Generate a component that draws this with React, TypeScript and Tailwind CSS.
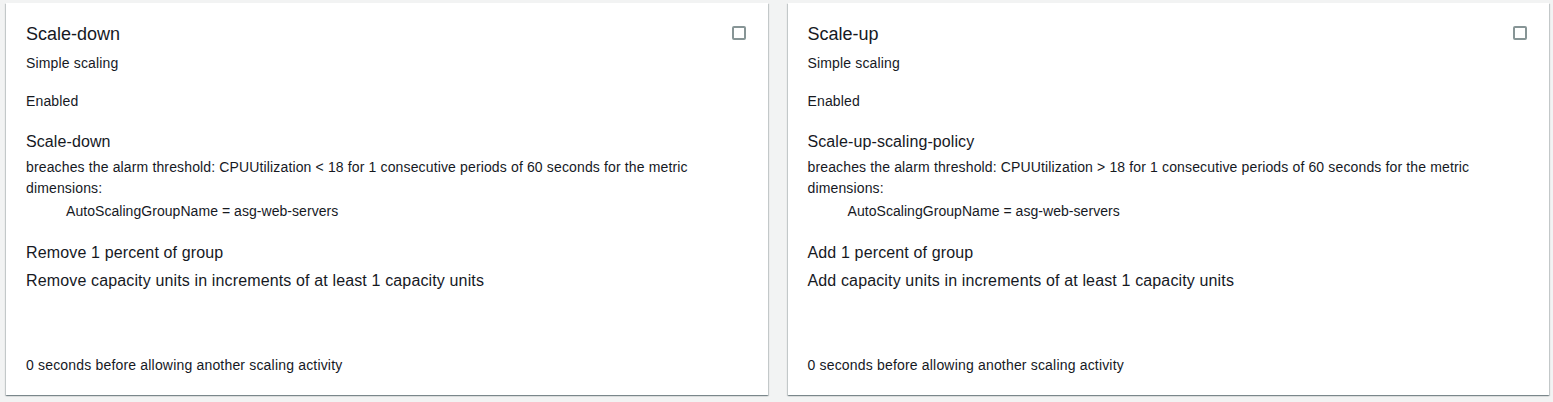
const policies = [
  {
    title: "Scale-down",
    alarm: "Scale-down",
    op: "<",
    action: "Remove 1 percent of group",
    detail: "Remove capacity units in increments of at least 1 capacity units",
  },
  {
    title: "Scale-up",
    alarm: "Scale-up-scaling-policy",
    op: ">",
    action: "Add 1 percent of group",
    detail: "Add capacity units in increments of at least 1 capacity units",
  },
];

function PolicyCard({ p }: { p: (typeof policies)[number] }) {
  return (
    <div className="flex-1 h-[392px] bg-white p-5 flex flex-col shadow-[0_1px_1px_0_rgba(0,28,36,0.3),1px_1px_1px_0_rgba(0,28,36,0.15),-1px_1px_1px_0_rgba(0,28,36,0.15)]">
      <div className="flex items-start justify-between">
        <div className="text-[18px] leading-[22px]">{p.title}</div>
        <input
          type="checkbox"
          className="appearance-none w-[14px] h-[14px] mt-[3px] mr-[2px] border-2 border-[#879596] rounded-[2px] bg-white"
        />
      </div>
      <div className="text-[14px] leading-[22px] mt-[7px] tracking-[0.15px]">Simple scaling</div>
      <div className="text-[14px] leading-[22px] mt-[16px] tracking-[0.15px]">Enabled</div>
      <div className="text-[16px] leading-[22px] mt-[19px] tracking-[0.1px]">{p.alarm}</div>
      <div className="text-[14px] leading-[21px] mt-[4px] tracking-[0.14px]">
        breaches the alarm threshold: CPUUtilization {p.op} 18 for 1 consecutive
        periods of 60 seconds for the metric dimensions:
      </div>
      <div className="text-[14px] leading-[21px] mt-[2px] pl-10 tracking-[0.05px]">
        AutoScalingGroupName = asg-web-servers
      </div>
      <div className="text-[16px] leading-[22px] mt-[20px] tracking-[0.14px]">{p.action}</div>
      <div className="text-[16px] leading-[22px] mt-[6px] tracking-[0.14px]">{p.detail}</div>
      <div className="text-[14px] leading-[20px] mt-auto tracking-[0.18px]">
        0 seconds before allowing another scaling activity
      </div>
    </div>
  );
}

export default function App() {
  return (
    <div className="w-[1553px] h-[402px] bg-[#f2f3f3] pt-[3px] pl-[6px] pr-[4px] flex gap-5 text-[#16191f] font-['Liberation_Sans',Arial,sans-serif]">
      {policies.map((p) => (
        <PolicyCard key={p.title} p={p} />
      ))}
    </div>
  );
}
